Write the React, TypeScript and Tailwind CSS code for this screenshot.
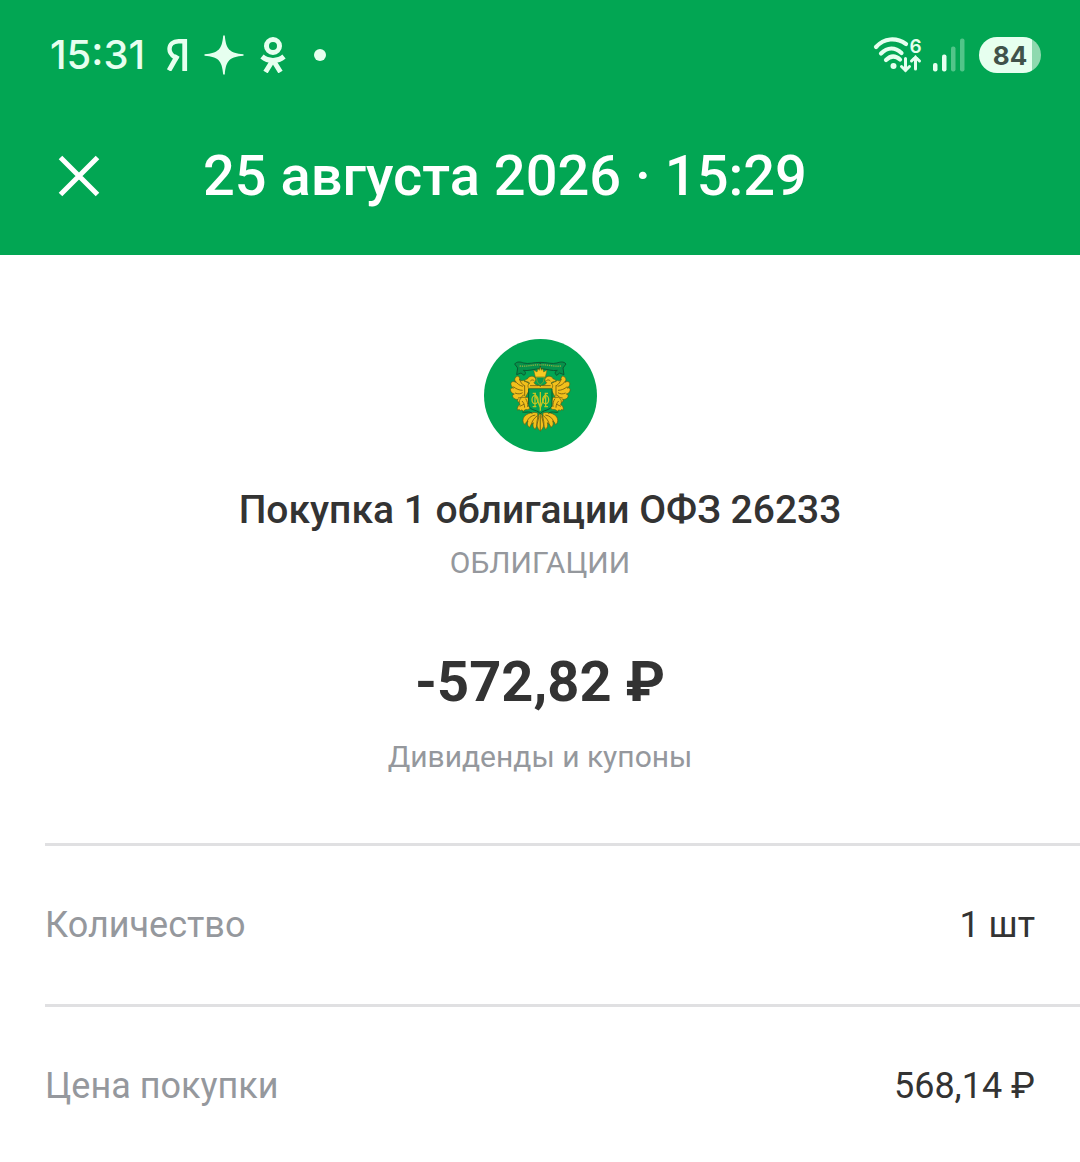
import { useState } from 'react'

type Detail = {
  label: string
  value: string
}

const DETAILS: Detail[] = [
  { label: 'Количество', value: '1 шт' },
  { label: 'Цена покупки', value: '568,14 ₽' },
]

function YandexIcon() {
  return (
    <svg viewBox="0 0 22 32" className="h-8 w-[22px]" fill="none" stroke="currentColor">
      <path d="M18.700 0v32" strokeWidth="4.800" />
      <path d="M19 2.200H12.500C7 2.200 3.500 5.200 3.500 10c0 3.600 1.500 5.600 4.800 7.800l3.500 2.400" strokeWidth="4.400" />
      <path d="M11.500 16.500 3 31.500" strokeWidth="4.800" />
    </svg>
  )
}

function SparkIcon() {
  return (
    <svg viewBox="0 0 40 40" className="size-10" fill="currentColor">
      <path d="M19.200 0.500h1.600C22 14.500 25.500 18 39.500 19.200v1.600C25.500 22 22 25.500 20.800 39.500h-1.600C18 25.500 14.500 22 .5 20.800v-1.600C14.500 18 18 14.500 19.200.5Z" />
    </svg>
  )
}

function OkIcon() {
  return (
    <svg viewBox="0 0 26 36" className="h-9 w-[26px]" fill="none" stroke="currentColor" strokeWidth="5">
      <circle cx="13" cy="9" r="6.500" />
      <path d="M2 19.500c3 2.600 6.500 3.900 11 3.900s8-1.300 11-3.900" />
      <path d="M13 23 5.500 35M13 23 20.500 35" />
    </svg>
  )
}

function WifiIcon() {
  return (
    <svg viewBox="0 0 50 38" className="h-[38px] w-[50px]" fill="none" stroke="currentColor" strokeWidth="4.200" strokeLinecap="round">
      <path d="M3 11C11 2 23 1 33 8" />
      <path d="M8 17.500C14.500 11 22 11 28.500 17" />
      <path d="M13 24c4.500-4.500 9.500-4.500 14-.5" />
      <circle cx="20.500" cy="30" r="3" fill="currentColor" stroke="none" />
      <path d="M32.500 22.500V34.500M28.500 30.500l4 4 4-4" strokeWidth="3" />
      <path d="M42.500 33V21M38.500 25l4-4 4 4" strokeWidth="3" />
      <text x="36.500" y="17" fontSize="19" fontWeight="600" fill="currentColor" stroke="none" fontFamily="Inter, sans-serif">6</text>
    </svg>
  )
}

function SignalIcon() {
  return (
    <svg viewBox="0 0 32 34" className="h-[34px] w-8" fill="currentColor">
      <rect x="0" y="25" width="4.500" height="8.500" rx="2" />
      <rect x="9" y="16.500" width="4.500" height="17" rx="2" />
      <rect x="18" y="8.500" width="4.500" height="25" rx="2" opacity="0.350" />
      <rect x="27" y="0.500" width="4.500" height="33" rx="2" opacity="0.350" />
    </svg>
  )
}

function EagleHalf() {
  return (
    <g>
      {/* ribbon */}
      <path d="M196 97C178 97 160 103 146 99c-8-3-20-6-27 3l9 12-3 20 13-5 9 7c6-4 6-12-2-15 14 3 31-4 51-5Z" fill="#06914a" stroke="#0b5a32" strokeWidth="3" />
      <path d="M134 108c20 3 38-5 62-3" stroke="#8fae42" strokeWidth="4" strokeDasharray="4 2.500" fill="none" />
      {/* wing */}
      <g fill="#f2c01c" stroke="#5c5a14" strokeWidth="2">
        <path d="M130 138c-10 2-14 10-8 19-8-5-16-1-14 7 1 5 4 8 8 10-7-2-11 2-9 9 2 5 6 8 11 9-5 1-7 5-4 10 3 5 9 7 15 6-3 4-1 8 3 9 6 2 12-2 15-7l16-30-1-20-17-9c-5 3-11 1-11-5 0-4-3-5-4-8Z" />
        <path d="M157 147c5-11 19-10 24-3 3 6 0 10-4 14 3 5 8 8 19 9v9h-34c-5-6-4-12 2-17-5-3-9-6-15-4 0-5 3-7 8-8Z" />
        <path d="M141 202c-8 4-10 14-6 22-6 2-10 10-7 17 3-3 6-3 8 1 3-3 6-3 9 2 3-4 7-6 13-5 7-2 10-8 8-15l-7-22Z" />
      </g>
      <path d="M120 152c6 9 14 15 24 17M115 170c9 7 18 11 28 11M120 189c9 4 17 3 23-1M129 204c8 0 13-4 17-10M133 147c3 9 8 16 16 21M149 166v32M166 153c4-4 8-4 12-1M165 167h25M141 213c5 5 8 11 8 20M152 206c5 7 7 16 6 25M134 229l13-6" fill="none" stroke="#6b5510" strokeWidth="2.400" />
      {/* tail */}
      <g fill="#f2c01c" stroke="#5c5a14" strokeWidth="2">
        <path d="M184 248c-16-3-36 6-39 17-3 8 0 17 6 19 1-6 4-10 8-11-4 9-1 17 6 19 1-7 5-11 10-14-3 9 0 17 6 20 2-7 5-12 8-15l-1-34Z" />
        <path d="M196 246c-8 16-14 33-9 44 2 6 5 10 9 13Z" />
      </g>
      <path d="M181 255c-13 2-21 9-25 20M187 257c-10 8-16 16-18 27M192 259l-7 29" fill="none" stroke="#6b5510" strokeWidth="2.400" />
      <path d="M142 246c10 3 19-4 30 4" fill="none" stroke="#0b5a30" strokeWidth="3" />
    </g>
  )
}

function MinistryEmblem() {
  return (
    <svg viewBox="27 27 339 339" className="size-[113px]" role="img" aria-label="ОФЗ">
      <circle cx="196.500" cy="196.500" r="169.500" fill="#02a653" />
      <EagleHalf />
      <g transform="matrix(-1 0 0 1 392 0)">
        <EagleHalf />
      </g>
      {/* crown */}
      <path d="m181 141-5-21 10 6 3-10 4 5 3-10 3 10 4-5 3 10 10-6-5 21Z" fill="#f8cb22" stroke="#765e10" strokeWidth="1.500" />
      <path d="M184 142h24l-3 14-9 9-9-9Z" fill="#0a9850" stroke="#a9a51b" strokeWidth="2" />
      {/* shield */}
      <path d="M161 176h70v48c0 10-10 14-18 17-8 2-13 5-17 10-4-5-9-8-17-10-8-3-18-7-18-17Z" fill="#03a251" stroke="#075c31" strokeWidth="3" />
      <path d="M161 173h70" stroke="#e2b51b" strokeWidth="4" />
      <g fill="none" stroke="#c5c522" strokeWidth="4">
        <path d="M180 190v40M212 190v40M180 191l16 42 16-42M196 186v56" />
        <ellipse cx="180" cy="209" rx="9" ry="12" />
        <ellipse cx="212" cy="209" rx="9" ry="12" />
        <path d="M173 190h10M209 190h10M173 230h11M208 230h11" />
      </g>
    </svg>
  )
}

function StatusBar() {
  return (
    <div className="flex h-[110px] items-center pl-[50px] pr-[39px] text-[#e6ffef]">
      <span className="font-['Inter',sans-serif] text-[40px] leading-10 font-medium">15:31</span>
      <div className="ml-[21px] flex items-center gap-4">
        <YandexIcon />
        <SparkIcon />
        <OkIcon />
        <span className="ml-3 size-3 rounded-full bg-current" />
      </div>
      <div className="ml-auto flex items-center">
        <WifiIcon />
        <div className="ml-[10px]">
          <SignalIcon />
        </div>
        <div className="ml-[14px] flex h-9 w-[62px] items-center justify-center rounded-full bg-linear-to-r from-[#e6ffef] from-85% to-[#8fd9af] to-85% font-['Inter',sans-serif] text-[26px] font-bold text-[#40524a]">
          84
        </div>
      </div>
    </div>
  )
}

export default function App() {
  const [open, setOpen] = useState(true)

  if (!open) return null

  return (
    <main className="min-h-screen bg-white font-['Roboto',sans-serif] text-[#333333]">
      <header className="bg-[#02a653] pb-[39px]">
        <StatusBar />
        <div className="flex h-[106px] items-center pt-[26px] text-white">
          <button type="button" aria-label="Закрыть" onClick={() => setOpen(false)} className="ml-[58px] cursor-pointer">
            <svg viewBox="0 0 42 42" className="size-[42px]" fill="none" stroke="currentColor" strokeWidth="5">
              <path d="m2.500 2.500 37 37M39.500 2.500l-37 37" />
            </svg>
          </button>
          <h1 className="ml-[103px] text-[56px] leading-16 font-medium">25 августа 2026 · 15:29</h1>
        </div>
      </header>

      <section className="flex flex-col items-center pt-[84px] pb-[66px] text-center">
        <MinistryEmblem />
        <h2 className="mt-8 text-[39px] leading-[52px] font-medium">Покупка 1 облигации ОФЗ 26233</h2>
        <p className="mt-1 text-[30px] leading-[46px] text-[#95989d]">ОБЛИГАЦИИ</p>
        <p className="mt-16 text-[56px] leading-16 font-bold">-572,82 ₽</p>
        <p className="mt-[23px] text-[30px] leading-[40px] text-[#95989d]">Дивиденды и купоны</p>
      </section>

      <dl className="pl-[45px]">
        {DETAILS.map((d) => (
          <div key={d.label} className="flex h-[161px] items-center justify-between border-t-3 border-[#e0e0e2] pr-[45px] text-[36px] leading-12">
            <dt className="text-[#95989d]">{d.label}</dt>
            <dd>{d.value}</dd>
          </div>
        ))}
      </dl>
    </main>
  )
}
